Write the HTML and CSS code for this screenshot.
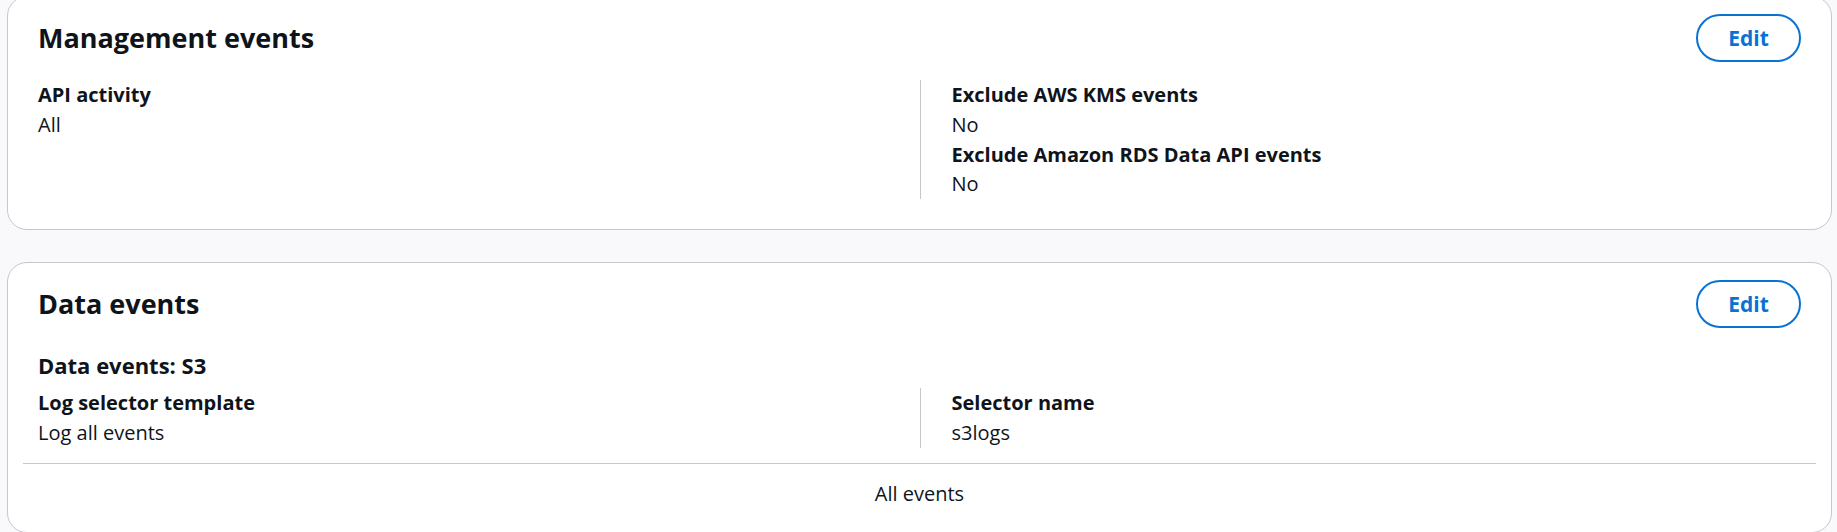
FILE: index.html
```html
<!DOCTYPE html>
<html lang="en">
<head>
<meta charset="utf-8">
<title>Trail details</title>
<link rel="stylesheet" href="styles.css">
</head>
<body>
<div class="page">
  <section class="card card-first">
    <header class="card-header">
      <h2 class="card-title">Management events</h2>
      <button class="btn-edit" type="button">Edit</button>
    </header>
    <div class="columns">
      <div class="col">
        <div class="kv-label">API activity</div>
        <div class="kv-value">All</div>
      </div>
      <div class="col col-bordered">
        <div class="kv-label">Exclude AWS KMS events</div>
        <div class="kv-value">No</div>
        <div class="kv-label">Exclude Amazon RDS Data API events</div>
        <div class="kv-value">No</div>
      </div>
    </div>
  </section>

  <section class="card card-second">
    <header class="card-header">
      <h2 class="card-title">Data events</h2>
      <button class="btn-edit" type="button">Edit</button>
    </header>
    <h3 class="sub-title">Data events: S3</h3>
    <div class="columns columns-tight">
      <div class="col">
        <div class="kv-label">Log selector template</div>
        <div class="kv-value">Log all events</div>
      </div>
      <div class="col col-bordered">
        <div class="kv-label">Selector name</div>
        <div class="kv-value">s3logs</div>
      </div>
    </div>
    <div class="table-area">
      <div class="table-row">All events</div>
    </div>
  </section>
</div>
</body>
</html>
```

FILE: styles.css
```css
* { box-sizing: border-box; }

html, body {
  margin: 0;
  padding: 0;
  background: #f9f9fb;
  height: 100%;
  overflow: hidden;
}

body {
  font-family: "Open Sans", "Noto Sans", "Liberation Sans", sans-serif;
  color: #0f141a;
  font-size: 20px;
  line-height: 29.75px;
}

.page {
  padding: 0 5px 0 7px;
  display: flex;
  flex-direction: column;
  gap: 32px;
  margin-top: -4px;
}

.card {
  background: #ffffff;
  border: 1px solid #c6c6cd;
  border-radius: 20px;
  padding: 17px 30px 30px 30px;
}

.card-second {
  padding-bottom: 24px;
}

.card-header {
  display: flex;
  align-items: center;
  justify-content: space-between;
  height: 48px;
}

.card-title {
  margin: 0;
  font-size: 27px;
  line-height: 34px;
  font-weight: 700;
}

.btn-edit {
  width: 105px;
  height: 48px;
  border: 2px solid #0972d3;
  border-radius: 24px;
  background: #ffffff;
  color: #0972d3;
  font-family: inherit;
  font-size: 21px;
  font-weight: 700;
  padding: 0;
  cursor: pointer;
}

.columns {
  display: grid;
  grid-template-columns: 1fr 1fr;
  margin-top: 18px;
}

.col-bordered {
  border-left: 1px solid #c6c6cd;
  padding-left: 31px;
}

.kv-label {
  font-weight: 700;
}

.sub-title {
  margin: 22px 0 0 0;
  font-size: 22px;
  line-height: 30px;
  font-weight: 700;
}

.columns-tight {
  margin-top: 8px;
}

.table-area {
  margin: 15px -15px 0 -15px;
  border-top: 1px solid #c6c6cd;
  padding-top: 15px;
}

.table-row {
  text-align: center;
}
```
